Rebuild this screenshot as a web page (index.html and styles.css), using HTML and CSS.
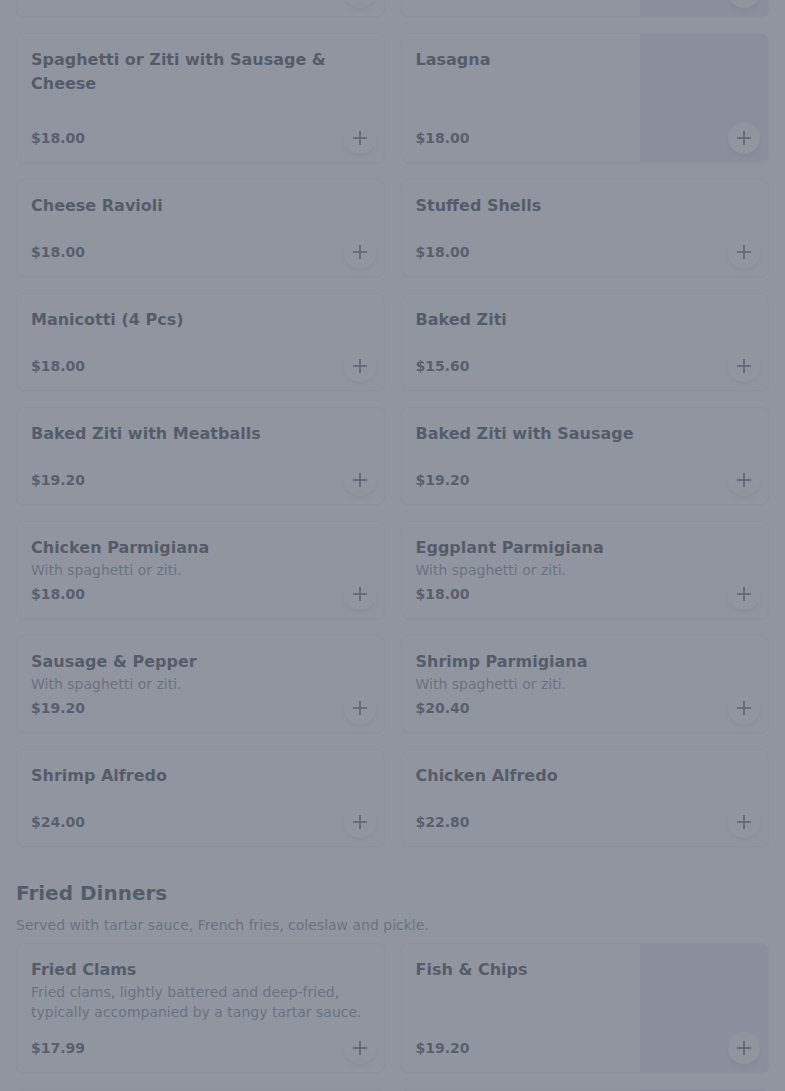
FILE: index.html
```html
<!DOCTYPE html>
<html lang="en">
<head>
<meta charset="utf-8">
<title>Menu</title>
<link rel="stylesheet" href="styles.css">
</head>
<body>
<main class="page">
  <section class="section">
    <div class="grid">
      <article class="card">
        <div class="card-body">
          <h3 class="title">Spaghetti or Ziti with Meatballs</h3>
          <p class="price">$18.00</p>
        </div>
        <button class="add" aria-label="Add"><svg viewBox="0 0 14 14" width="14" height="14"><path d="M7 0v14M0 7h14"/></svg></button>
      </article>
      <article class="card">
        <div class="card-body">
          <h3 class="title">Spaghetti or Ziti with Meat Sauce</h3>
          <p class="price">$18.00</p>
        </div>
        <div class="card-img"></div>
        <button class="add" aria-label="Add"><svg viewBox="0 0 14 14" width="14" height="14"><path d="M7 0v14M0 7h14"/></svg></button>
      </article>

      <article class="card">
        <div class="card-body">
          <h3 class="title">Spaghetti or Ziti with Sausage &amp; Cheese</h3>
          <p class="price">$18.00</p>
        </div>
        <button class="add" aria-label="Add"><svg viewBox="0 0 14 14" width="14" height="14"><path d="M7 0v14M0 7h14"/></svg></button>
      </article>
      <article class="card">
        <div class="card-body">
          <h3 class="title">Lasagna</h3>
          <p class="price">$18.00</p>
        </div>
        <div class="card-img"></div>
        <button class="add" aria-label="Add"><svg viewBox="0 0 14 14" width="14" height="14"><path d="M7 0v14M0 7h14"/></svg></button>
      </article>

      <article class="card">
        <div class="card-body">
          <h3 class="title">Cheese Ravioli</h3>
          <p class="price">$18.00</p>
        </div>
        <button class="add" aria-label="Add"><svg viewBox="0 0 14 14" width="14" height="14"><path d="M7 0v14M0 7h14"/></svg></button>
      </article>
      <article class="card">
        <div class="card-body">
          <h3 class="title">Stuffed Shells</h3>
          <p class="price">$18.00</p>
        </div>
        <button class="add" aria-label="Add"><svg viewBox="0 0 14 14" width="14" height="14"><path d="M7 0v14M0 7h14"/></svg></button>
      </article>

      <article class="card">
        <div class="card-body">
          <h3 class="title">Manicotti (4 Pcs)</h3>
          <p class="price">$18.00</p>
        </div>
        <button class="add" aria-label="Add"><svg viewBox="0 0 14 14" width="14" height="14"><path d="M7 0v14M0 7h14"/></svg></button>
      </article>
      <article class="card">
        <div class="card-body">
          <h3 class="title">Baked Ziti</h3>
          <p class="price">$15.60</p>
        </div>
        <button class="add" aria-label="Add"><svg viewBox="0 0 14 14" width="14" height="14"><path d="M7 0v14M0 7h14"/></svg></button>
      </article>

      <article class="card">
        <div class="card-body">
          <h3 class="title">Baked Ziti with Meatballs</h3>
          <p class="price">$19.20</p>
        </div>
        <button class="add" aria-label="Add"><svg viewBox="0 0 14 14" width="14" height="14"><path d="M7 0v14M0 7h14"/></svg></button>
      </article>
      <article class="card">
        <div class="card-body">
          <h3 class="title">Baked Ziti with Sausage</h3>
          <p class="price">$19.20</p>
        </div>
        <button class="add" aria-label="Add"><svg viewBox="0 0 14 14" width="14" height="14"><path d="M7 0v14M0 7h14"/></svg></button>
      </article>

      <article class="card">
        <div class="card-body">
          <h3 class="title">Chicken Parmigiana</h3>
          <p class="desc">With spaghetti or ziti.</p>
          <p class="price">$18.00</p>
        </div>
        <button class="add" aria-label="Add"><svg viewBox="0 0 14 14" width="14" height="14"><path d="M7 0v14M0 7h14"/></svg></button>
      </article>
      <article class="card">
        <div class="card-body">
          <h3 class="title">Eggplant Parmigiana</h3>
          <p class="desc">With spaghetti or ziti.</p>
          <p class="price">$18.00</p>
        </div>
        <button class="add" aria-label="Add"><svg viewBox="0 0 14 14" width="14" height="14"><path d="M7 0v14M0 7h14"/></svg></button>
      </article>

      <article class="card">
        <div class="card-body">
          <h3 class="title">Sausage &amp; Pepper</h3>
          <p class="desc">With spaghetti or ziti.</p>
          <p class="price">$19.20</p>
        </div>
        <button class="add" aria-label="Add"><svg viewBox="0 0 14 14" width="14" height="14"><path d="M7 0v14M0 7h14"/></svg></button>
      </article>
      <article class="card">
        <div class="card-body">
          <h3 class="title">Shrimp Parmigiana</h3>
          <p class="desc">With spaghetti or ziti.</p>
          <p class="price">$20.40</p>
        </div>
        <button class="add" aria-label="Add"><svg viewBox="0 0 14 14" width="14" height="14"><path d="M7 0v14M0 7h14"/></svg></button>
      </article>

      <article class="card">
        <div class="card-body">
          <h3 class="title">Shrimp Alfredo</h3>
          <p class="price">$24.00</p>
        </div>
        <button class="add" aria-label="Add"><svg viewBox="0 0 14 14" width="14" height="14"><path d="M7 0v14M0 7h14"/></svg></button>
      </article>
      <article class="card">
        <div class="card-body">
          <h3 class="title">Chicken Alfredo</h3>
          <p class="price">$22.80</p>
        </div>
        <button class="add" aria-label="Add"><svg viewBox="0 0 14 14" width="14" height="14"><path d="M7 0v14M0 7h14"/></svg></button>
      </article>
    </div>
  </section>

  <section class="section">
    <h2 class="section-title">Fried Dinners</h2>
    <p class="section-sub">Served with tartar sauce, French fries, coleslaw and pickle.</p>
    <div class="grid">
      <article class="card">
        <div class="card-body">
          <h3 class="title">Fried Clams</h3>
          <p class="desc">Fried clams, lightly battered and deep-fried, typically accompanied by a tangy tartar sauce.</p>
          <p class="price">$17.99</p>
        </div>
        <button class="add" aria-label="Add"><svg viewBox="0 0 14 14" width="14" height="14"><path d="M7 0v14M0 7h14"/></svg></button>
      </article>
      <article class="card">
        <div class="card-body">
          <h3 class="title">Fish &amp; Chips</h3>
          <p class="price">$19.20</p>
        </div>
        <div class="card-img"></div>
        <button class="add" aria-label="Add"><svg viewBox="0 0 14 14" width="14" height="14"><path d="M7 0v14M0 7h14"/></svg></button>
      </article>

      <article class="card">
        <div class="card-body">
          <h3 class="title">Fried Shrimp</h3>
          <p class="price">$19.20</p>
        </div>
        <button class="add" aria-label="Add"><svg viewBox="0 0 14 14" width="14" height="14"><path d="M7 0v14M0 7h14"/></svg></button>
      </article>
      <article class="card">
        <div class="card-body">
          <h3 class="title">Fried Scallops</h3>
          <p class="price">$21.60</p>
        </div>
        <div class="card-img"></div>
        <button class="add" aria-label="Add"><svg viewBox="0 0 14 14" width="14" height="14"><path d="M7 0v14M0 7h14"/></svg></button>
      </article>
    </div>
  </section>
</main>
<div class="backdrop"></div>
</body>
</html>
```

FILE: styles.css
```css
* { box-sizing: border-box; }

html, body {
  margin: 0;
  padding: 0;
  background: #ffffff;
}

body {
  font-family: "DejaVu Sans", "Noto Sans", sans-serif;
  color: #111827;
  overflow: hidden;
}

.page {
  padding: 0 16px;
  margin-top: -113px;
}

.grid {
  display: grid;
  grid-template-columns: 1fr 1fr;
  gap: 16px;
}

.section-title {
  margin: 32px 0 8px;
  font-size: 20px;
  line-height: 28px;
  font-weight: 700;
  color: #111827;
}

.section-sub {
  margin: 0 0 8px;
  font-size: 14px;
  line-height: 20px;
  color: #6b7280;
}

.card {
  position: relative;
  display: flex;
  background: #ffffff;
  border: 1px solid #eef0f3;
  border-radius: 8px;
  box-shadow: 0 1px 2px rgba(0, 0, 0, 0.05);
  overflow: hidden;
}

.card-body {
  flex: 1;
  min-width: 0;
  min-height: 96px;
  display: flex;
  flex-direction: column;
  padding: 14px;
}

.title {
  margin: 0;
  font-size: 16px;
  line-height: 24px;
  font-weight: 700;
  color: #111827;
}

.desc {
  margin: 0;
  font-size: 14px;
  line-height: 20px;
  color: #6b7280;
}

.price {
  margin: auto 0 0;
  padding-top: 4px;
  font-size: 14px;
  line-height: 20px;
  font-weight: 700;
  color: #1f2937;
}

.card-img {
  flex: 0 0 128px;
  min-height: 128px;
  background: #e5e7eb;
}

.add {
  position: absolute;
  right: 8px;
  bottom: 8px;
  width: 32px;
  height: 32px;
  padding: 0;
  border: none;
  border-radius: 50%;
  background: #ffffff;
  box-shadow: 0 4px 6px -1px rgba(0, 0, 0, 0.1), 0 2px 4px -2px rgba(0, 0, 0, 0.1);
  display: flex;
  align-items: center;
  justify-content: center;
}

.add svg {
  fill: none;
  stroke: #1f2937;
  stroke-width: 1.5;
}

.backdrop {
  position: fixed;
  inset: 0;
  background: rgba(107, 114, 128, 0.75);
}
```
